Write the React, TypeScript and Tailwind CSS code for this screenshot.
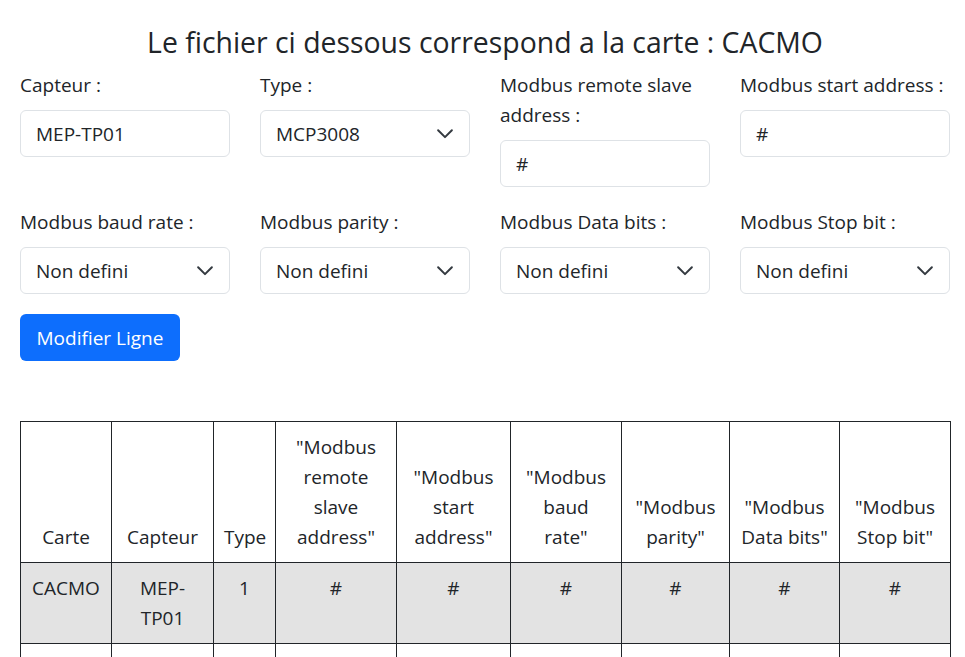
import { useState } from 'react';

const fields = [
  { label: 'Capteur :', kind: 'input', value: 'MEP-TP01' },
  { label: 'Type :', kind: 'select', value: 'MCP3008' },
  { label: 'Modbus remote slave address :', kind: 'input', value: '#' },
  { label: 'Modbus start address :', kind: 'input', value: '#' },
  { label: 'Modbus baud rate :', kind: 'select', value: 'Non defini' },
  { label: 'Modbus parity :', kind: 'select', value: 'Non defini' },
  { label: 'Modbus Data bits :', kind: 'select', value: 'Non defini' },
  { label: 'Modbus Stop bit :', kind: 'select', value: 'Non defini' },
];

const headers: { lines: string[]; w: string }[] = [
  { lines: ['Carte'], w: 'w-[91px]' },
  { lines: ['Capteur'], w: 'w-[102px]' },
  { lines: ['Type'], w: 'w-[62px]' },
  { lines: ['"Modbus', 'remote', 'slave', 'address"'], w: 'w-[121px]' },
  { lines: ['"Modbus', 'start', 'address"'], w: 'w-[114px]' },
  { lines: ['"Modbus', 'baud', 'rate"'], w: 'w-[111px]' },
  { lines: ['"Modbus', 'parity"'], w: 'w-[108px]' },
  { lines: ['"Modbus', 'Data bits"'], w: 'w-[110px]' },
  { lines: ['"Modbus', 'Stop bit"'], w: 'w-[111px]' },
];

const rows: string[][][] = [
  [['CACMO'], ['MEP-', 'TP01'], ['1'], ['#'], ['#'], ['#'], ['#'], ['#'], ['#']],
  [[''], [''], [''], [''], [''], [''], [''], [''], ['']],
];

function Chevron() {
  return (
    <svg
      className="pointer-events-none absolute right-[15px] top-1/2 -translate-y-1/2"
      width="20"
      height="15"
      viewBox="0 2 16 12"
      fill="none"
      stroke="#343a40"
      strokeWidth="1.6"
      strokeLinecap="round"
      strokeLinejoin="round"
    >
      <path d="m2.5 5 5.5 5.5 5.5-5.5" />
    </svg>
  );
}

function Field({ label, kind, value }: { label: string; kind: string; value: string }) {
  const [val, setVal] = useState(value);
  return (
    <div>
      <label className="mb-[10px] block leading-[30px]">{label}</label>
      {kind === 'input' ? (
        <input
          value={val}
          onChange={(e) => setVal(e.target.value)}
          className="block h-[47px] w-full rounded-[6px] border border-[#dee2e6] bg-white px-[15px] text-[#212529] outline-none"
        />
      ) : (
        <div className="relative">
          <select
            value={val}
            onChange={(e) => setVal(e.target.value)}
            className="block h-[47px] w-full appearance-none rounded-[6px] border border-[#dee2e6] bg-white pl-[15px] pr-[45px] text-[#212529] outline-none"
          >
            <option>{value}</option>
          </select>
          <Chevron />
        </div>
      )}
    </div>
  );
}

export default function App() {
  return (
    <div className="min-h-screen bg-white pl-[20px] pr-[15px] text-[19px] leading-[30px] text-[#212529] [font-family:'Open_Sans',sans-serif]">
      <h3 className="pt-[24px] pb-[10px] text-center text-[28.4px] leading-[36px] font-normal">
        Le fichier ci dessous correspond a la carte : CACMO
      </h3>

      {/* Form */}
      <div className="grid grid-cols-4 gap-x-[30px] gap-y-[20px]">
        {fields.map((f) => (
          <Field key={f.label} {...f} />
        ))}
      </div>

      <button className="mt-[20px] h-[47px] rounded-[6px] bg-[#0d6efd] px-[16.5px] text-white">
        Modifier Ligne
      </button>

      {/* Table */}
      <table className="mt-[60px] w-full table-fixed border-collapse text-center">
        <thead>
          <tr>
            {headers.map((h, i) => (
              <th key={i} className={`${h.w} border border-[#212529] p-[10px] align-bottom font-normal whitespace-nowrap`}>
                {h.lines.map((l, j) => (
                  <div key={j}>{l}</div>
                ))}
              </th>
            ))}
          </tr>
        </thead>
        <tbody>
          {rows.map((r, i) => (
            <tr key={i} className={i === 0 ? 'bg-[#e3e3e3]' : 'bg-white'}>
              {r.map((c, j) => (
                <td key={j} className="h-[81px] border border-[#212529] p-[10px] align-top">
                  {c.map((l, k) => (
                    <div key={k}>{l || '\u00a0'}</div>
                  ))}
                </td>
              ))}
            </tr>
          ))}
        </tbody>
      </table>
    </div>
  );
}
